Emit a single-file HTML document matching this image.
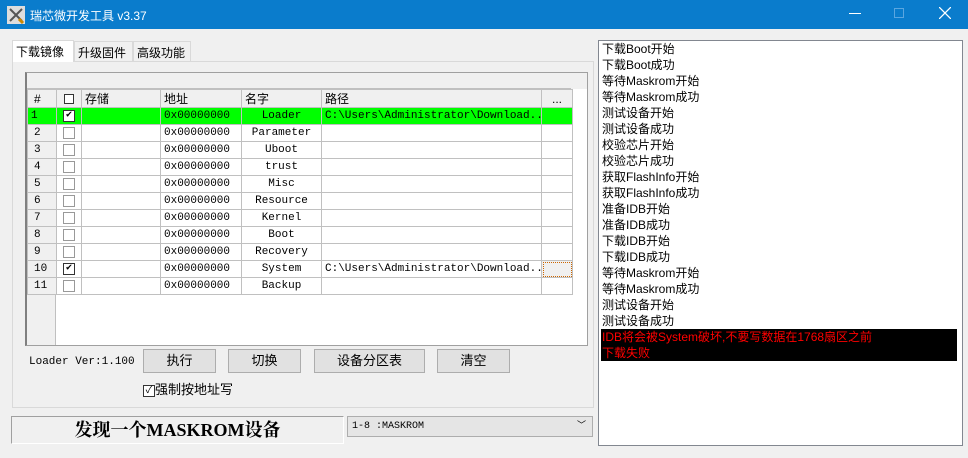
<!DOCTYPE html>
<html><head><meta charset="utf-8"><style>
*{box-sizing:border-box;margin:0;padding:0}
body{width:968px;height:458px;background:#f0f0f0;font-family:"Liberation Sans","Noto Sans CJK SC",sans-serif;font-size:12px;position:relative;overflow:hidden}
.abs{position:absolute}
.title{left:0;top:0;width:968px;height:29px;background:#0a7ccc;color:#fff}
.mono{font-family:"Liberation Mono","Noto Sans CJK SC",monospace;font-size:11px}
.tab{top:41px;height:21px;border:1px solid #d9d9d9;border-bottom:none;padding:2px 3px;font-size:12px;background:#f0f0f0;white-space:nowrap;overflow:hidden}
.btn{top:349px;height:24px;background:#e1e1e1;border:1px solid #adadad;text-align:center;line-height:22px;font-size:13px}
table{border-collapse:collapse;table-layout:fixed}
td{border:1px solid #c0c0c0;height:17px;padding:0 3px;white-space:nowrap;overflow:hidden;font-family:"Liberation Mono","Noto Sans CJK SC",monospace;font-size:11px;background:#fff}
td.rh{background:#f0f0f0;text-align:left;padding-left:6px}
td.c{text-align:center}
tr.hd td{background:#f0f0f0;font-family:"Liberation Sans","Noto Sans CJK SC",sans-serif;font-size:12px}
tr.g td{background:#00ff00}
.cb{display:inline-block;width:12px;height:12px;border:1px solid #333;background:#fff;vertical-align:middle;font-size:10px;line-height:10px;text-align:center}
.cb.e{border-color:#999}
.log div{height:16px;line-height:16px;font-size:12px;white-space:nowrap}
</style></head><body>
<div class="abs title">
 <svg class="abs" style="left:7px;top:6px" width="18" height="18"><rect width="18" height="18" fill="#ddd"/><path d="M3 15L15 3M3 3l12 12" stroke="#555" stroke-width="2"/><path d="M12 13l4 4" stroke="#c80" stroke-width="3"/></svg>
 <span class="abs" style="left:30px;top:7px;font-size:12px">瑞芯微开发工具 v3.37</span>
 <div class="abs" style="left:849px;top:13px;width:12px;height:1px;background:#fff"></div>
 <div class="abs" style="left:894px;top:8px;width:10px;height:10px;border:1px solid #5aa6e0"></div>
 <svg class="abs" style="left:939px;top:7px" width="12" height="12"><path d="M0 0L12 12M12 0L0 12" stroke="#fff" stroke-width="1.3"/></svg>
</div>
<div class="abs tab" style="left:12px;width:62px;background:#fff;top:40px;height:22px;z-index:2">下载镜像</div>
<div class="abs tab" style="left:74px;width:59px">升级固件</div>
<div class="abs tab" style="left:133px;width:58px">高级功能</div>
<div class="abs" style="left:12px;top:61px;width:582px;height:347px;border:1px solid #d9d9d9;background:#f0f0f0"></div>
<div class="abs" style="left:25px;top:72px;width:563px;height:274px;border:1px solid #a0a0a0;border-left:2px solid #808080;background:#fff"></div>
<div class="abs" style="left:27px;top:73px;width:544px;height:16px;background:#f0f0f0;border-bottom:1px solid #c0c0c0"></div>
<div class="abs" style="left:27px;top:89px;width:29px;height:256px;background:#f0f0f0;border-right:1px solid #c0c0c0"></div>
<div class="abs" style="left:571px;top:73px;width:16px;height:16px;background:#f0f0f0"></div>
<table class="abs" style="left:27px;top:89px;width:545px">
<colgroup><col style="width:29px"><col style="width:25px"><col style="width:79px"><col style="width:81px"><col style="width:80px"><col style="width:220px"><col style="width:31px"></colgroup>
<tr class="hd"><td class="rh">#</td><td class="c"><span class="cb" style="width:10px;height:10px"></span></td><td>存储</td><td>地址</td><td>名字</td><td>路径</td><td class="c">...</td></tr>
<tr class="g"><td>1</td><td class="c"><span class="cb">✔</span></td><td></td><td>0x00000000</td><td class="c">Loader</td><td>C:\Users\Administrator\Download...</td><td></td></tr>
<tr><td class="rh">2</td><td class="c"><span class="cb e"></span></td><td></td><td>0x00000000</td><td class="c">Parameter</td><td></td><td></td></tr>
<tr><td class="rh">3</td><td class="c"><span class="cb e"></span></td><td></td><td>0x00000000</td><td class="c">Uboot</td><td></td><td></td></tr>
<tr><td class="rh">4</td><td class="c"><span class="cb e"></span></td><td></td><td>0x00000000</td><td class="c">trust</td><td></td><td></td></tr>
<tr><td class="rh">5</td><td class="c"><span class="cb e"></span></td><td></td><td>0x00000000</td><td class="c">Misc</td><td></td><td></td></tr>
<tr><td class="rh">6</td><td class="c"><span class="cb e"></span></td><td></td><td>0x00000000</td><td class="c">Resource</td><td></td><td></td></tr>
<tr><td class="rh">7</td><td class="c"><span class="cb e"></span></td><td></td><td>0x00000000</td><td class="c">Kernel</td><td></td><td></td></tr>
<tr><td class="rh">8</td><td class="c"><span class="cb e"></span></td><td></td><td>0x00000000</td><td class="c">Boot</td><td></td><td></td></tr>
<tr><td class="rh">9</td><td class="c"><span class="cb e"></span></td><td></td><td>0x00000000</td><td class="c">Recovery</td><td></td><td></td></tr>
<tr><td class="rh">10</td><td class="c"><span class="cb">✔</span></td><td></td><td>0x00000000</td><td class="c">System</td><td>C:\Users\Administrator\Download...</td><td style="background:#f0f0f0;outline:1px dotted #c60;outline-offset:-2px"></td></tr>
<tr><td class="rh">11</td><td class="c"><span class="cb e"></span></td><td></td><td>0x00000000</td><td class="c">Backup</td><td></td><td></td></tr>
</table>
<div class="abs mono" style="left:29px;top:356px">Loader Ver:1.100</div>
<div class="abs btn" style="left:143px;width:73px">执行</div>
<div class="abs btn" style="left:228px;width:73px">切换</div>
<div class="abs btn" style="left:314px;width:111px">设备分区表</div>
<div class="abs btn" style="left:437px;width:73px">清空</div>
<div class="abs" style="left:143px;top:379px;font-size:13px;white-space:nowrap"><span class="cb" style="border-color:#333;font-size:10px">✓</span>强制按地址写</div>
<div class="abs" style="left:11px;top:416px;width:333px;height:28px;border:1px solid #a0a0a0;border-right-color:#fff;border-bottom-color:#fff;text-align:center;font-family:'Liberation Serif','Noto Serif CJK SC',serif;font-size:18px;font-weight:bold;line-height:26px">发现一个MASKROM设备</div>
<div class="abs mono" style="left:347px;top:416px;width:246px;height:21px;border:1px solid #adadad;background:#e5e5e5;padding-left:4px;line-height:19px;font-size:10px">1-8 :MASKROM<span style="position:absolute;right:6px;top:0;font-size:9px">﹀</span></div>
<div class="abs log" style="left:598px;top:40px;width:365px;height:406px;border:1px solid #828790;background:#fff;padding:0 0 0 3px">
<div>下载Boot开始</div><div>下载Boot成功</div><div>等待Maskrom开始</div><div>等待Maskrom成功</div><div>测试设备开始</div><div>测试设备成功</div><div>校验芯片开始</div><div>校验芯片成功</div><div>获取FlashInfo开始</div><div>获取FlashInfo成功</div><div>准备IDB开始</div><div>准备IDB成功</div><div>下载IDB开始</div><div>下载IDB成功</div><div>等待Maskrom开始</div><div>等待Maskrom成功</div><div>测试设备开始</div><div>测试设备成功</div>
<div style="background:#000;color:#f00;margin-left:-1px;width:356px;padding-left:1px">IDB将会被System破坏,不要写数据在1768扇区之前</div>
<div style="background:#000;color:#f00;margin-left:-1px;width:356px;padding-left:1px">下载失败</div>
</div>
</body></html>
